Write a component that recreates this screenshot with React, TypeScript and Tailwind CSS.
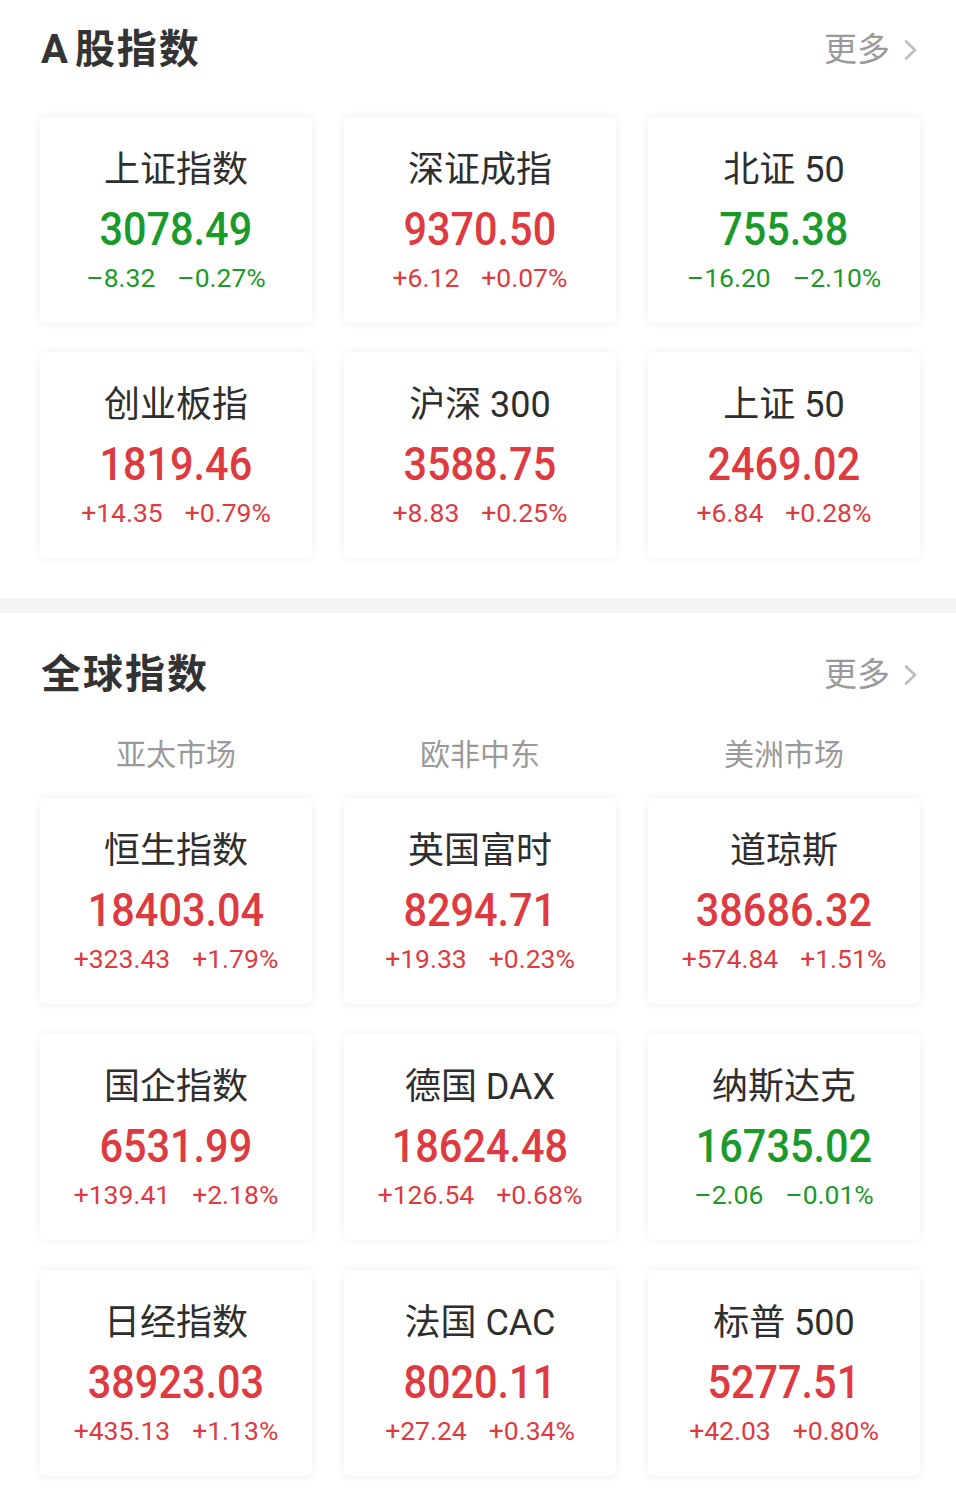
import React from "react";

type Item = { name: string; value: string; chg: string; pct: string; up: boolean };

const aShares: Item[] = [
  { name: "上证指数", value: "3078.49", chg: "–8.32", pct: "–0.27%", up: false },
  { name: "深证成指", value: "9370.50", chg: "+6.12", pct: "+0.07%", up: true },
  { name: "北证 50", value: "755.38", chg: "–16.20", pct: "–2.10%", up: false },
  { name: "创业板指", value: "1819.46", chg: "+14.35", pct: "+0.79%", up: true },
  { name: "沪深 300", value: "3588.75", chg: "+8.83", pct: "+0.25%", up: true },
  { name: "上证 50", value: "2469.02", chg: "+6.84", pct: "+0.28%", up: true },
];

const globals: Item[] = [
  { name: "恒生指数", value: "18403.04", chg: "+323.43", pct: "+1.79%", up: true },
  { name: "英国富时", value: "8294.71", chg: "+19.33", pct: "+0.23%", up: true },
  { name: "道琼斯", value: "38686.32", chg: "+574.84", pct: "+1.51%", up: true },
  { name: "国企指数", value: "6531.99", chg: "+139.41", pct: "+2.18%", up: true },
  { name: "德国 DAX", value: "18624.48", chg: "+126.54", pct: "+0.68%", up: true },
  { name: "纳斯达克", value: "16735.02", chg: "–2.06", pct: "–0.01%", up: false },
  { name: "日经指数", value: "38923.03", chg: "+435.13", pct: "+1.13%", up: true },
  { name: "法国 CAC", value: "8020.11", chg: "+27.24", pct: "+0.34%", up: true },
  { name: "标普 500", value: "5277.51", chg: "+42.03", pct: "+0.80%", up: true },
];

const font = { fontFamily: 'Roboto, "Liberation Sans", "Noto Sans CJK SC", sans-serif' };

function Card({ item }: { item: Item }) {
  const color = item.up ? "text-[#de3a3f]" : "text-[#1a9a2b]";
  return (
    <div className="h-[206px] rounded-[6px] bg-white shadow-[0_0_10px_rgba(0,0,0,0.07)] flex flex-col items-center">
      <div className="pt-[33px] text-[36px] leading-[40px] text-[#2e2e2e] whitespace-pre">{item.name}</div>
      <div className={`mt-[14px] text-[46px] leading-[50px] font-medium ${color} scale-x-90`}>{item.value}</div>
      <div className={`mt-[8px] flex gap-[22px] text-[26.5px] leading-[32px] ${color}`}>
        <span>{item.chg}</span>
        <span>{item.pct}</span>
      </div>
    </div>
  );
}

function Header({ title, latin }: { title: string; latin?: string }) {
  return (
    <div className="flex items-center justify-between pl-[41px] pr-[38px] h-[48px]">
      <div className="flex items-center text-[40px] leading-[48px] font-bold text-[#333333]">
        {latin && <span className="mr-[7px]">{latin}</span>}
        <span className="tracking-[2px]">{title}</span>
      </div>
      <div className="flex items-center gap-[13px]">
        <span className="text-[33px] leading-[40px] text-[#9a9a9a]">更多</span>
        <svg width="15" height="22" viewBox="0 0 15 22" fill="none">
          <path d="M3 2.5 L12 11 L3 19.5" stroke="#bdbdbd" strokeWidth="2.6" strokeLinecap="round" strokeLinejoin="round" />
        </svg>
      </div>
    </div>
  );
}

export default function App() {
  return (
    <div className="w-[956px] h-[1510px] bg-white overflow-hidden" style={font}>
      <section className="pt-[26px] pb-[40px]">
        <Header latin="A" title="股指数" />
        <div className="mt-[43px] grid grid-cols-3 gap-x-[32px] gap-y-[29px] pl-[40px] pr-[36px]">
          {aShares.map((it) => (
            <Card key={it.name} item={it} />
          ))}
        </div>
      </section>
      <div className="h-[15px] bg-[#f4f4f4]" />
      <section className="pt-[38px]">
        <Header title="全球指数" />
        <div className="mt-[36px] grid grid-cols-3 gap-x-[32px] pl-[40px] pr-[36px]">
          {["亚太市场", "欧非中东", "美洲市场"].map((l) => (
            <div key={l} className="text-center text-[30px] leading-[40px] text-[#9a9a9a]">
              {l}
            </div>
          ))}
        </div>
        <div className="mt-[23px] grid grid-cols-3 gap-x-[32px] gap-y-[30px] pl-[40px] pr-[36px]">
          {globals.map((it) => (
            <Card key={it.name} item={it} />
          ))}
        </div>
      </section>
    </div>
  );
}
